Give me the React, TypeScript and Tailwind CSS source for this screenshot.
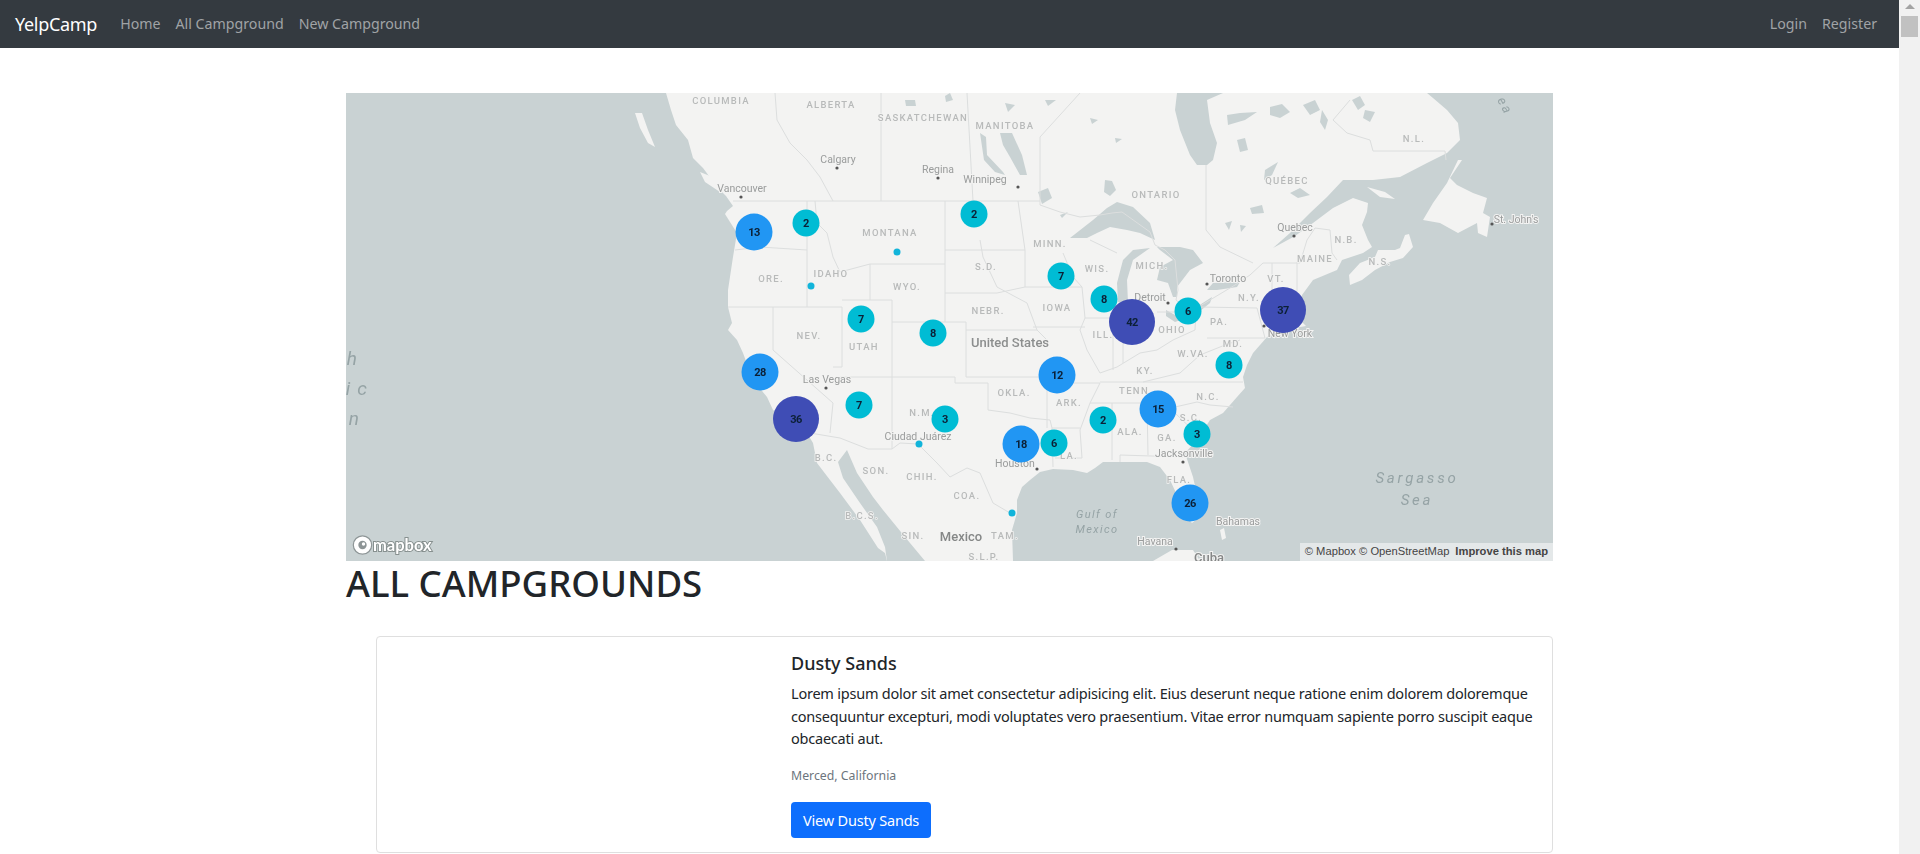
const land =
  "666,93 671,110 676,125 688,140 693,158 703,168 706,172 716,186 726,196 733,206 727,211 725,214 730,222 737,233 733,257 728,290 728,307 732,323 728,330 737,340 743,353 753,380 767,397 773,410 790,422 807,433 813,443 817,463 830,480 840,493 860,520 878,548 885,553 887,561 1013,561 1012,530 1017,513 1017,500 1022,487 1030,480 1040,472 1053,469 1073,470 1087,473 1095,468 1103,462 1123,462 1147,462 1160,467 1170,480 1177,495 1184,515 1192,523 1198,518 1197,495 1193,477 1185,453 1197,440 1210,420 1223,413 1237,397 1245,388 1243,377 1247,365 1253,353 1267,337 1270,335 1283,330 1306,326 1298,318 1302,295 1313,280 1337,270 1342,260 1363,253 1372,247 1368,240 1362,225 1367,212 1368,203 1353,198 1333,208 1313,223 1295,236 1273,248 1290,233 1310,213 1327,197 1343,180 1373,180 1400,177 1427,163 1447,153 1460,140 1458,123 1447,110 1433,98 1427,93";

const islands = [
  "1350,285 1349,275 1360,263 1375,257 1378,250 1395,250 1400,248 1405,235 1409,234 1413,247 1403,258 1390,262 1375,270 1362,280",
  "1458,160 1462,160 1450,178 1457,185 1473,193 1487,198 1483,213 1490,217 1487,237 1478,233 1477,223 1458,233 1440,223 1423,220 1433,203 1447,183",
  "1367,187 1385,192 1395,199 1380,197",
  "1153,561 1172,550 1193,550 1200,561",
  "700,172 715,178 728,190 720,192 705,182",
  "635,113 642,113 648,130 655,147 648,143 640,128",
  "1220,530 1224,528 1226,538 1222,540",
];

const water = [
  "847,450 857,473 873,497 883,510 905,537 925,561 887,561 885,547 877,527 860,503 843,478 838,462",
  "1177,93 1223,93 1207,100 1210,123 1217,143 1213,160 1207,165 1197,165 1190,155 1180,130 1175,110",
  "1070,238 1093,220 1107,208 1117,202 1133,207 1150,223 1155,240 1140,233 1127,230 1110,227 1097,233 1087,238",
  "1133,250 1150,248 1133,260 1127,280 1128,303 1118,302 1117,283 1123,260",
  "1157,247 1180,247 1193,250 1203,263 1190,270 1177,287 1177,297 1173,297 1168,283 1157,280 1160,267 1173,260 1160,250",
  "1166,310 1175,315 1195,308 1212,297 1210,303 1195,315 1175,322 1166,316",
  "1207,290 1213,283 1240,282 1237,287 1217,290",
  "1000,133 1012,133 1022,155 1027,175 1020,175 1010,157 1003,145",
  "980,133 986,137 987,155 1003,172 1005,175 995,172 984,160",
  "1038,192 1048,188 1052,198 1042,204",
  "1105,180 1112,181 1116,190 1110,196 1104,192",
  "1227,115 1240,113 1257,112 1245,120 1228,125",
  "1270,107 1282,104 1290,112 1280,118 1270,115",
  "1303,105 1315,100 1320,110 1310,115",
  "1322,110 1328,120 1325,130 1320,122",
  "1352,100 1360,96 1365,105 1358,110",
  "1365,110 1375,112 1370,122 1363,118",
  "1237,140 1245,138 1248,150 1240,152",
  "1265,170 1278,162 1272,175 1264,180",
  "1250,208 1262,205 1264,213 1252,214",
  "1290,193 1300,188 1310,195 1298,198",
  "945,96 950,93 953,100 946,102",
  "905,100 915,100 916,106 906,106",
  "1005,103 1015,105 1008,112",
  "1045,100 1056,100 1048,106",
  "1090,118 1098,120 1092,124",
  "1115,138 1122,139 1116,143",
  "1060,215 1068,212 1062,218",
  "1225,223 1232,221 1229,230",
  "1240,225 1246,226 1241,232",
];

const borders = [
  "733,201 1040,201 1040,205 1060,212 1080,217 1100,215 1112,213",
  "1112,213 1122,212 1150,232 1155,245 1165,250 1175,260 1178,290 1176,300 1190,312 1210,300 1235,285 1250,275 1263,263 1300,263 1307,240 1315,228 1330,230 1332,253 1337,260",
  "945,201 945,322",
  "945,250 1025,250",
  "870,264 945,264",
  "945,293 997,293",
  "892,322 966,322 966,377",
  "870,264 870,300 892,300 892,449",
  "1018,201 1025,250 1025,287 1082,287",
  "1025,287 997,293",
  "1063,253 1073,277 1082,287 1085,318 1080,330 1087,350 1100,373 1117,367 1140,353 1157,350 1173,340 1195,330 1196,308",
  "1090,240 1117,253",
  "1085,318 1115,318",
  "1033,327 1085,327",
  "997,287 1027,303 1037,330 1047,340",
  "966,330 1037,330",
  "840,377 955,377 955,383 988,383 988,410 1010,413 1030,418 1050,420 1052,428 1053,467",
  "966,377 1047,377 1047,428",
  "1047,383 1100,383 1090,403 1080,430 1082,458 1055,458",
  "1052,428 1080,428",
  "1100,382 1243,382",
  "1090,403 1173,403",
  "1175,407 1197,402 1210,405 1233,407",
  "1175,413 1200,437",
  "1147,403 1148,455",
  "1112,403 1112,460",
  "1120,462 1120,455 1183,457",
  "1143,382 1180,373 1200,355 1225,345 1240,340",
  "1207,338 1265,338",
  "1200,307 1257,308 1265,338",
  "1272,263 1272,290 1283,292",
  "1297,262 1297,292",
  "1113,330 1113,370",
  "1123,330 1123,363",
  "1157,312 1183,312",
  "810,433 840,438 868,449 892,449 900,443 918,444 937,463 950,477 967,468 980,473 993,503 1010,513",
  "773,350 833,403 830,433",
  "728,307 842,307 842,367 833,367",
  "773,307 773,350",
  "735,250 760,247 807,250",
  "807,201 807,307",
  "815,201 817,223 827,233 833,257 840,272 855,268 870,264",
  "842,300 870,300",
  "881,93 881,201",
  "967,93 973,201",
  "1040,201 1040,137 1080,93",
  "775,93 777,120 790,143 807,160 820,177 833,201",
  "1206,165 1206,230 1220,247 1253,263",
  "1373,151 1445,151 1446,160",
  "1373,151 1370,140 1347,133 1333,120 1350,100",
  "980,240 983,257 997,287",
];

const stateLabels: [string, number, number][] = [
  ["COLUMBIA", 721, 100], ["ALBERTA", 831, 104], ["SASKATCHEWAN", 923, 117], ["MANITOBA", 1005, 125],
  ["ONTARIO", 1156, 194], ["QUÉBEC", 1287, 180], ["N.L.", 1414, 138], ["N.B.", 1346, 239], ["MAINE", 1315, 258],
  ["N.S.", 1380, 261], ["VT.", 1276, 278], ["N.Y.", 1249, 297], ["PA.", 1219, 321], ["MONTANA", 890, 232],
  ["MINN.", 1050, 243], ["S.D.", 986, 266], ["WIS.", 1097, 268], ["MICH.", 1152, 265], ["WYO.", 907, 286],
  ["IOWA", 1057, 307], ["NEBR.", 988, 310], ["OHIO", 1172, 329], ["ILL.", 1103, 334], ["IDAHO", 831, 273],
  ["ORE.", 771, 278], ["NEV.", 809, 335], ["UTAH", 864, 346], ["KY.", 1145, 370], ["W.VA.", 1193, 353],
  ["MD.", 1233, 343], ["OKLA.", 1014, 392], ["ARK.", 1069, 402], ["TENN.", 1136, 390], ["N.C.", 1208, 396],
  ["S.C.", 1191, 417], ["ALA.", 1130, 431], ["GA.", 1167, 437], ["LA.", 1069, 455], ["FLA.", 1179, 479],
  ["N.M.", 922, 412], ["SON.", 876, 470], ["CHIH.", 922, 476], ["COA.", 967, 495], ["B.C.S.", 862, 515],
  ["SIN.", 913, 535], ["TAM.", 1005, 535], ["S.L.P.", 984, 556], ["B.C.", 826, 457],
];

const cityLabels: [string, number, number][] = [
  ["Calgary", 838, 159], ["Regina", 938, 169], ["Winnipeg", 985, 179], ["Vancouver", 742, 188], ["Quebec", 1295, 227],
  ["Toronto", 1228, 278], ["St. John's", 1516, 219], ["Detroit", 1150, 297], ["New York", 1290, 333], ["Las Vegas", 827, 379],
  ["Ciudad Juárez", 918, 436], ["Houston", 1015, 463], ["Jacksonville", 1184, 453], ["Bahamas", 1238, 521], ["Havana", 1155, 541],
];

const cityDots = [
  [837, 168], [938, 178], [1018, 187], [741, 197], [1294, 236], [1207, 284], [1492, 224], [1168, 303], [1264, 326],
  [826, 388], [1037, 469], [1183, 462], [1176, 549],
];

const clusters: [number, number, number, string][] = [
  [754, 232, 18.5, "13"], [806, 223, 13.5, "2"], [974, 214, 13.5, "2"], [1061, 276, 13.5, "7"], [1104, 299, 13.5, "8"],
  [1132, 322, 23, "42"], [1188, 311, 13.5, "6"], [1283, 310, 23, "37"], [861, 319, 13.5, "7"], [933, 333, 13.5, "8"],
  [1229, 365, 13.5, "8"], [1057, 375, 18.5, "12"], [1158, 409, 18.5, "15"], [1103, 420, 13.5, "2"], [1197, 434, 13.5, "3"],
  [945, 419, 13.5, "3"], [859, 405, 13.5, "7"], [1021, 444, 18.5, "18"], [1054, 443, 13.5, "6"], [1190, 503, 18.5, "26"],
  [760, 372, 18.5, "28"], [796, 419, 23, "36"],
];

const points = [[811, 286], [897, 252], [919, 444], [1012, 513]];

function clusterColor(r: number) {
  if (r > 20) return "#3f4db5";
  if (r > 15) return "#2196f3";
  return "#00bcd4";
}

function CampMap() {
  return (
    <div className="relative h-[468px] w-full overflow-hidden bg-[#c9d2d3]">
      <svg viewBox="346 93 1207 468" className="block h-full w-full blur-[0.3px]">
        <polygon points={land} fill="#f3f3f2" />
        {islands.map((p) => (
          <polygon key={p} points={p} fill="#f3f3f2" />
        ))}
        {water.map((p) => (
          <polygon key={p} points={p} fill="#c9d2d3" />
        ))}
        {borders.map((p) => (
          <polyline key={p} points={p} fill="none" stroke="#dcdede" strokeWidth="1" />
        ))}

        {stateLabels.map(([name, x, y]) => (
          <text key={name} x={x} y={y + 3.5} textAnchor="middle" className="fill-[#b8baba] stroke-[#f3f3f2] font-['Roboto',sans-serif] text-[9.5px] font-medium tracking-[1.3px] [paint-order:stroke] [stroke-width:1.5px]">
            {name}
          </text>
        ))}
        {cityLabels.map(([name, x, y]) => (
          <text key={name} x={x} y={y + 3.5} textAnchor="middle" className="fill-[#9a9c9c] stroke-[#f3f3f2] font-['Roboto',sans-serif] text-[10.5px] [paint-order:stroke] [stroke-width:2px]">
            {name}
          </text>
        ))}
        {cityDots.map(([x, y]) => (
          <circle key={x} cx={x} cy={y} r="1.6" fill="#555" />
        ))}
        <text x="1010" y="346.5" textAnchor="middle" className="fill-[#8c8e8e] stroke-[#f3f3f2] font-['Roboto',sans-serif] text-[13px] font-medium [paint-order:stroke] [stroke-width:2px]">United States</text>
        <text x="961" y="540.5" textAnchor="middle" className="fill-[#858787] stroke-[#f3f3f2] font-['Roboto',sans-serif] text-[13px] font-medium [paint-order:stroke] [stroke-width:2px]">Mexico</text>
        <text x="1209" y="562" textAnchor="middle" className="fill-[#858787] stroke-[#f3f3f2] font-['Roboto',sans-serif] text-[13px] font-medium [paint-order:stroke] [stroke-width:2px]">Cuba</text>

        <text x="1417" y="483" textAnchor="middle" className="fill-[#95a3a5] font-['Roboto',sans-serif] text-[15px] italic tracking-[2.8px]">Sargasso</text>
        <text x="1417" y="505" textAnchor="middle" className="fill-[#95a3a5] font-['Roboto',sans-serif] text-[15px] italic tracking-[2.8px]">Sea</text>
        <text x="1097" y="518" textAnchor="middle" className="fill-[#95a3a5] font-['Roboto',sans-serif] text-[11px] italic tracking-[1.4px]">Gulf of</text>
        <text x="1097" y="533" textAnchor="middle" className="fill-[#95a3a5] font-['Roboto',sans-serif] text-[11px] italic tracking-[1.4px]">Mexico</text>
        <text x="364" y="365" textAnchor="end" className="fill-[#95a3a5] font-['Roboto',sans-serif] text-[19px] italic tracking-[7px]">North</text>
        <text x="374" y="395" textAnchor="end" className="fill-[#95a3a5] font-['Roboto',sans-serif] text-[19px] italic tracking-[7px]">Pacific</text>
        <text x="366" y="425" textAnchor="end" className="fill-[#95a3a5] font-['Roboto',sans-serif] text-[19px] italic tracking-[7px]">Ocean</text>
        <text x="1497" y="100" transform="rotate(62 1497 100)" className="fill-[#95a3a5] font-['Roboto',sans-serif] text-[13px] italic tracking-[2.5px]">ea</text>

        {points.map(([x, y]) => (
          <circle key={x} cx={x} cy={y} r="3.5" fill="#11b4da" />
        ))}
        {clusters.map(([x, y, r, count]) => (
          <g key={`${x}-${count}`}>
            <circle cx={x} cy={y} r={r} fill={clusterColor(r)} />
            <text x={x} y={y + 4} textAnchor="middle" className="fill-[#0c2036] font-['Roboto',sans-serif] text-[11px] font-bold tracking-[-0.5px]">
              {count}
            </text>
          </g>
        ))}

        <circle cx="362.5" cy="545" r="9.2" fill="#fff" stroke="#8d9596" strokeWidth="1.2" />
        <circle cx="362.5" cy="545" r="4.2" fill="#8d9596" />
        <circle cx="363.5" cy="544" r="1.7" fill="#fff" />
        <text x="373" y="550.5" className="fill-white stroke-[#87908f] font-['Lato',sans-serif] text-[16.5px] font-bold [paint-order:stroke] [stroke-width:2px]">mapbox</text>
      </svg>
      <div className="absolute bottom-0 right-0 flex h-[18px] items-center gap-[6px] bg-[#e4e8e9] px-[5px] font-['Liberation_Sans',sans-serif] text-[11.2px] leading-none text-[#444]">
        <span>© Mapbox © OpenStreetMap</span>
        <span className="font-bold">Improve this map</span>
      </div>
    </div>
  );
}

export default function App() {
  return (
    <div className="flex h-screen overflow-hidden bg-white font-['Noto_Sans',sans-serif] text-[#212529]">
      <main className="min-w-0 flex-1">
        <nav className="flex h-12 items-center bg-[#343a40] pl-[15px] pr-[22px] text-[14.2px]">
          <a className="mr-[23px] text-[18px] tracking-[-0.3px] text-white">YelpCamp</a>
          <div className="flex gap-[15px] text-[#a0a3a6]">
            <a>Home</a>
            <a>All Campground</a>
            <a>New Campground</a>
          </div>
          <div className="ml-auto flex gap-[15px] text-[#a0a3a6]">
            <a>Login</a>
            <a>Register</a>
          </div>
        </nav>

        <div className="mx-auto mt-[45px] w-[1207px]">
          <CampMap />
          <h1 className="mb-[30px] text-[36.6px] font-medium leading-[45px]">ALL CAMPGROUNDS</h1>

          <div className="ml-[30px] flex h-[217px] rounded border border-[#dfdfdf]">
            <div className="w-[399px] shrink-0" />
            <div className="flex-1 p-[15px]">
              <h5 className="mb-[7.5px] text-[18px] font-medium leading-[22.5px]">Dusty Sands</h5>
              <p className="mb-[15px] text-[14.5px] leading-[22.5px] tracking-[-0.22px]">
                Lorem ipsum dolor sit amet consectetur adipisicing elit. Eius deserunt neque ratione enim dolorem doloremque consequuntur excepturi, modi voluptates vero praesentium. Vitae error numquam sapiente porro suscipit eaque obcaecati aut.
              </p>
              <p className="mb-[15px] text-[12.3px] leading-[22.5px] text-[#6c757d]">Merced, California</p>
              <a className="inline-block h-9 rounded bg-[#0d6efd] px-3 text-[14.5px] leading-9 tracking-[-0.2px] text-white">View Dusty Sands</a>
            </div>
          </div>
        </div>
      </main>

      {/* fake browser scrollbar */}
      <div className="flex w-[21px] shrink-0 flex-col items-center bg-[#f1f1f1]">
        <div className="mt-[4px] h-0 w-0 border-x-[5px] border-b-[5px] border-x-transparent border-b-[#a3a3a3]" />
        <div className="mt-[7px] h-[21px] w-[17px] bg-[#c1c1c1]" />
      </div>
    </div>
  );
}
